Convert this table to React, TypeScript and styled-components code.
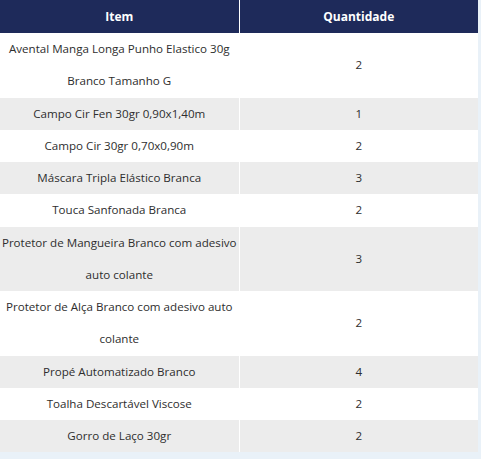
import React from "react";
import styled, { createGlobalStyle } from "styled-components";

const Global = createGlobalStyle`
  html, body { margin: 0; padding: 0; background: #e9f1f8; }
  body { font-family: "Open Sans", "Noto Sans", sans-serif; }
`;

const Page = styled.div`
  width: 481px;
  height: 459px;
  background: #e9f1f8;
  overflow: hidden;
`;

const Table = styled.table`
  width: 478px;
  border-collapse: collapse;
  table-layout: fixed;
  background: #fff;
`;

const HeadCell = styled.th`
  background: #1e2a5a;
  color: #fff;
  font-weight: 700;
  font-size: 12px;
  height: 33px;
  padding: 0 4px;
  text-align: center;
  & + & { border-left: 1px solid #fff; }
`;

const Row = styled.tr<{ $shade: boolean }>`
  background: ${(p) => (p.$shade ? "#ececec" : "#ffffff")};
`;

const Cell = styled.td`
  color: #2e2e2e;
  font-size: 11.6px;
  line-height: 32.25px;
  padding: 0;
  text-align: center;
  vertical-align: middle;
  & + & { border-left: 1px solid #fff; }
`;

const items: [string, number][] = [
  ["Avental Manga Longa Punho Elastico 30g Branco Tamanho G", 2],
  ["Campo Cir Fen 30gr 0,90x1,40m", 1],
  ["Campo Cir 30gr 0,70x0,90m", 2],
  ["Máscara Tripla Elástico Branca", 3],
  ["Touca Sanfonada Branca", 2],
  ["Protetor de Mangueira Branco com adesivo auto colante", 3],
  ["Protetor de Alça Branco com adesivo auto colante", 2],
  ["Propé Automatizado Branco", 4],
  ["Toalha Descartável Viscose", 2],
  ["Gorro de Laço 30gr", 2],
];

export default function App() {
  return (
    <Page>
      <Global />
      <Table>
        <thead>
          <tr>
            <HeadCell>Item</HeadCell>
            <HeadCell>Quantidade</HeadCell>
          </tr>
        </thead>
        <tbody>
          {items.map(([name, qty], i) => (
            <Row key={name} $shade={i % 2 === 1}>
              <Cell>{name}</Cell>
              <Cell>{qty}</Cell>
            </Row>
          ))}
        </tbody>
      </Table>
    </Page>
  );
}
